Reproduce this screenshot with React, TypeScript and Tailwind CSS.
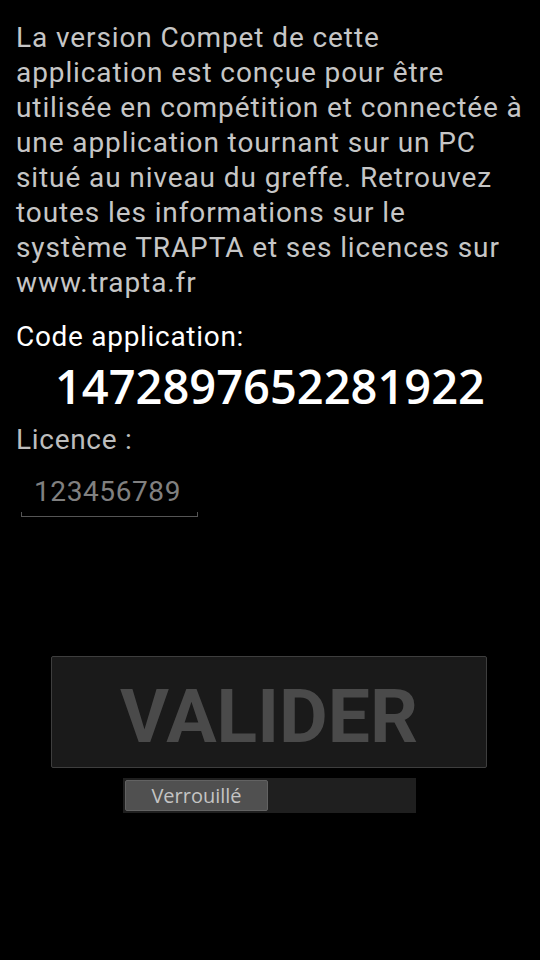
import React from "react";

const intro = [
  "La version Compet de cette",
  "application est conçue pour être",
  "utilisée en compétition et connectée à",
  "une application tournant sur un PC",
  "situé au niveau du greffe. Retrouvez",
  "toutes les informations sur le",
  "système TRAPTA et ses licences sur",
  "www.trapta.fr",
];

export default function App() {
  return (
    <div className="w-[540px] h-[960px] bg-black overflow-hidden font-['Roboto',sans-serif]">
      <div className="flex flex-col pt-[20px] px-[16px]">
        {/* Intro text */}
        <p className="text-[28px] leading-[35px] tracking-[0.9px] text-[#c6c6c6] whitespace-nowrap">
          {intro.map((line, i) => (
            <React.Fragment key={i}>
              {line}
              {i < intro.length - 1 && <br />}
            </React.Fragment>
          ))}
        </p>

        <div className="mt-[19px] text-[28px] leading-[35px] tracking-[0.7px] text-white">
          Code application:
        </div>
        <div className="mt-[7px] -mx-[16px] text-center font-['Open_Sans',sans-serif] font-semibold text-[47px] leading-[50px] text-white">
          1472897652281922
        </div>

        <div className="mt-[11px] text-[28px] leading-[35px] tracking-[0.7px] text-[#bdbdbd]">
          Licence :
        </div>

        {/* Licence input */}
        <div className="mt-[17px] ml-[5px] w-[177px]">
          <div className="pl-[13px] text-[28px] leading-[35px] tracking-[0.6px] text-[#808080]">
            123456789
          </div>
          <div className="mt-[3px] h-[5px] border-x border-b border-[#555555]" />
        </div>
      </div>

      {/* Valider button */}
      <div className="mt-[139px] mx-[51px] w-[436px] h-[112px] flex items-center justify-center bg-[#1a1a1a] border border-[#3e3e3e] rounded-[2px]">
        <span className="font-bold text-[75px] leading-none text-[#4a4a4a] mt-[9px]">
          VALIDER
        </span>
      </div>

      {/* Lock toggle */}
      <div className="mt-[10px] ml-[123px] w-[293px] h-[35px] p-[2px] bg-[#1f1f1f]">
        <div className="w-[143px] h-full flex items-center justify-center bg-[#505050] border border-[#626262] rounded-[2px] font-['Open_Sans',sans-serif] text-[20px] text-[#c4c4c4]">
          Verrouillé
        </div>
      </div>
    </div>
  );
}
